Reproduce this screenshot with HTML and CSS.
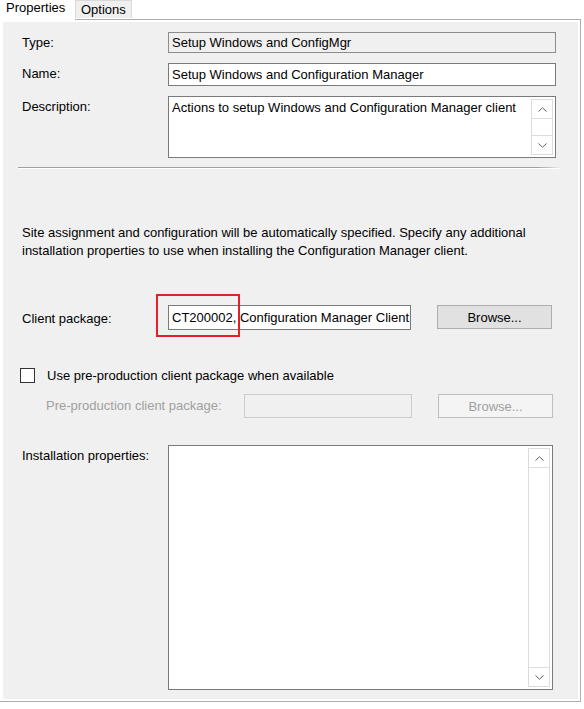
FILE: index.html
```html
<!DOCTYPE html>
<html lang="en">
<head>
    <meta charset="UTF-8">
    <title>Setup Windows and ConfigMgr - Properties</title>
    <link rel="stylesheet" href="styles.css">
</head>
<body>
    <div class="tabs">
        <div class="tab active">Properties</div>
        <div class="tab">Options</div>
    </div>
    <div class="tab-page">
        <div class="page">
            <div class="row">
                <label class="label">Type:</label>
                <div class="field readonly">Setup Windows and ConfigMgr</div>
            </div>
            <div class="row">
                <label class="label">Name:</label>
                <div class="field name">Setup Windows and Configuration Manager</div>
            </div>
            <div class="row">
                <label class="label">Description:</label>
                <div class="field memo desc">
                    <div class="memo-text">Actions to setup Windows and Configuration Manager client</div>
                    <div class="scrollbar">
                        <div class="arrow up"><svg width="9" height="5" viewBox="0 0 9 5"><path d="M0.5 4.5 L4.5 0.8 L8.5 4.5" fill="none" stroke="#606060" stroke-width="1"/></svg></div>
                        <div class="track"></div>
                        <div class="arrow down"><svg width="9" height="5" viewBox="0 0 9 5"><path d="M0.5 0.5 L4.5 4.2 L8.5 0.5" fill="none" stroke="#606060" stroke-width="1"/></svg></div>
                    </div>
                </div>
            </div>

            <div class="separator"></div>

            <p class="info">Site assignment and configuration will be automatically specified. Specify any additional installation properties to use when installing the Configuration Manager client.</p>

            <div class="row package-row">
                <label class="label">Client package:</label>
                <div class="package-wrap">
                    <div class="field package">CT200002, Configuration Manager Client</div>
                    <div class="highlight"></div>
                </div>
                <button class="btn">Browse...</button>
            </div>

            <div class="check-row">
                <span class="checkbox"></span>
                <span>Use pre-production client package when available</span>
            </div>

            <div class="row preprod-row">
                <label class="label disabled">Pre-production client package:</label>
                <div class="field preprod"></div>
                <button class="btn" disabled>Browse...</button>
            </div>

            <div class="row install-row">
                <label class="label">Installation properties:</label>
                <div class="field memo install">
                    <div class="memo-text"></div>
                    <div class="scrollbar">
                        <div class="arrow up"><svg width="9" height="5" viewBox="0 0 9 5"><path d="M0.5 4.5 L4.5 0.8 L8.5 4.5" fill="none" stroke="#606060" stroke-width="1"/></svg></div>
                        <div class="track"></div>
                        <div class="arrow down"><svg width="9" height="5" viewBox="0 0 9 5"><path d="M0.5 0.5 L4.5 4.2 L8.5 0.5" fill="none" stroke="#606060" stroke-width="1"/></svg></div>
                    </div>
                </div>
            </div>
        </div>
    </div>
</body>
</html>
```

FILE: styles.css
```css
body {
    font-family: 'Liberation Sans', Arial, sans-serif;
    font-size: 13px;
    margin: 0;
    padding: 0;
    background-color: #ffffff;
    color: #000;
}

/* Tab strip */
.tabs {
    display: flex;
    height: 19px;
    align-items: flex-start;
}
.tab {
    height: 18px;
    line-height: 17px;
    padding: 0 5px;
    background-color: #f0f0f0;
    border: 1px solid #d9d9d9;
    border-bottom: none;
    box-sizing: border-box;
}
.tab.active {
    background-color: #ffffff;
    height: 20px;
    line-height: 16px;
    padding: 0 6px 0 6px;
    border: none;
    width: 75px;
    position: relative;
    z-index: 1;
}

/* Tab page frame */
.tab-page {
    width: 581px;
    border: 1px solid #adadad;
    border-left: none;
    background-color: #ffffff;
    padding: 2px 2px 2px 3px;
    box-sizing: border-box;
}
.page {
    background-color: #f0f0f0;
    padding: 10px 0 10px 19px;
    height: 677px;
    box-sizing: border-box;
}

.row {
    display: flex;
    align-items: flex-start;
    margin-bottom: 10px;
}
.label {
    width: 146px;
    flex: none;
    padding-top: 3px;
    white-space: nowrap;
}
.label.disabled {
    color: #a0a0a0;
    width: 222px;
    padding-left: 24px;
    box-sizing: border-box;
    padding-top: 4px;
}

.field {
    box-sizing: border-box;
    border: 1px solid #7a7a7a;
    background-color: #ffffff;
    padding: 2px 3px;
    white-space: nowrap;
    overflow: hidden;
}
.field.readonly {
    width: 388px;
    height: 21px;
    background-color: #f0f0f0;
    border-color: #8c8c8c;
    line-height: 15px;
}
.field.name {
    width: 388px;
    height: 23px;
    line-height: 17px;
}
.field.memo {
    display: flex;
    padding: 2px 2px 2px 3px;
    white-space: normal;
}
.field.desc {
    width: 388px;
    height: 62px;
}
.field.install {
    width: 385px;
    height: 245px;
}
.memo-text {
    flex: 1;
    line-height: 17px;
}

/* Vertical scrollbar inside the memo boxes */
.scrollbar {
    width: 20px;
    display: flex;
    flex-direction: column;
    border: 1px solid #dcdcdc;
    background-color: #ffffff;
}
.arrow {
    height: 18px;
    display: flex;
    align-items: center;
    justify-content: center;
    flex: none;
}
.arrow.up {
    border-bottom: 1px solid #dcdcdc;
}
.arrow.down {
    border-top: 1px solid #dcdcdc;
}
.track {
    flex: 1;
}

.separator {
    margin: -1px 19px 0 -4px;
    height: 1px;
    background: linear-gradient(to right, #a0a0a0 96%, #e6e6e6);
    border-bottom: 1px solid #ffffff;
}

.info {
    margin: 55px 0 0 0;
    line-height: 18px;
    width: 530px;
}

.package-row {
    margin-top: 45px;
    margin-bottom: 0;
}
.package-row .label {
    padding-top: 6px;
}
.package-wrap {
    position: relative;
}
.field.package {
    width: 243px;
    height: 25px;
    line-height: 19px;
    padding: 2px 2px 2px 3px;
    border-color: #7a7a7a;
}
.highlight {
    position: absolute;
    left: -12px;
    top: -11px;
    width: 84px;
    height: 43px;
    border: 2px solid #e3202a;
    box-sizing: border-box;
}

.btn {
    font-family: inherit;
    font-size: 13px;
    width: 115px;
    height: 24px;
    margin-left: 26px;
    background-color: #e1e1e1;
    border: 1px solid #adadad;
    color: #000;
    padding: 0;
}
.btn:disabled {
    background-color: #f4f4f4;
    border-color: #bfbfbf;
    color: #a0a0a0;
}

.check-row {
    display: flex;
    align-items: center;
    margin: 38px 0 0 -2px;
    height: 15px;
}
.checkbox {
    width: 13px;
    height: 13px;
    border: 1px solid #333333;
    background-color: #ffffff;
    margin-right: 12px;
    flex: none;
}

.preprod-row {
    margin-top: 11px;
    margin-bottom: 0;
}
.field.preprod {
    width: 168px;
    height: 24px;
    background-color: #f0f0f0;
    border-color: #cccccc;
}
.preprod-row .btn {
    margin-left: 26px;
}

.install-row {
    margin-top: 27px;
    margin-bottom: 0;
}
```
